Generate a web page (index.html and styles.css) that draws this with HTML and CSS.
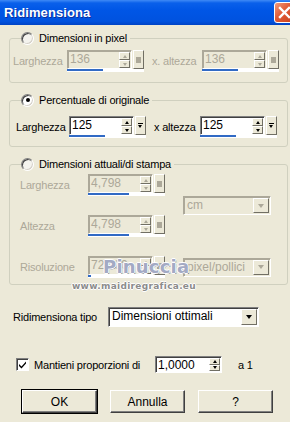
FILE: index.html
```html
<!DOCTYPE html>
<html lang="it">
<head>
<meta charset="utf-8">
<title>Ridimensiona</title>
<link rel="stylesheet" href="styles.css">
</head>
<body>
<div class="window">
  <div class="titlebar">
    <span class="title">Ridimensiona</span>
    <span class="close"><svg width="13" height="13" viewBox="0 0 13 13"><path d="M2 2 L11 11 M11 2 L2 11" stroke="#fff" stroke-width="2.4" stroke-linecap="square"/></svg></span>
  </div>
  <div class="content">
    <fieldset class="group g1 disabled">
      <legend><span class="radio"></span><span class="ltxt">Dimensioni in pixel</span></legend>
      <div class="row">
        <span class="lbl w54">Larghezza</span>
        <span class="spin">
          <span class="field"><span class="val">136</span><span class="arrows"><i class="up"></i><i class="dn"></i></span></span>
          <span class="extra"><i class="sq"></i></span>
          <span class="track"><b style="width:36px"></b></span>
        </span>
        <span class="lbl gap8 w50">x. altezza</span>
        <span class="spin">
          <span class="field"><span class="val">136</span><span class="arrows"><i class="up"></i><i class="dn"></i></span></span>
          <span class="extra"><i class="sq"></i></span>
          <span class="track"><b style="width:36px"></b></span>
        </span>
      </div>
    </fieldset>

    <fieldset class="group g2">
      <legend><span class="radio on"></span><span class="ltxt">Percentuale di originale</span></legend>
      <div class="row">
        <span class="lbl w53">Larghezza</span>
        <span class="spin">
          <span class="field"><span class="val">125</span><span class="arrows"><i class="up"></i><i class="dn"></i></span></span>
          <span class="extra"><i class="pop"></i></span>
          <span class="track"><b style="width:36px"></b></span>
        </span>
        <span class="lbl gap8 w46">x altezza</span>
        <span class="spin">
          <span class="field"><span class="val">125</span><span class="arrows"><i class="up"></i><i class="dn"></i></span></span>
          <span class="extra"><i class="pop"></i></span>
          <span class="track"><b style="width:36px"></b></span>
        </span>
      </div>
    </fieldset>

    <fieldset class="group g3 disabled">
      <legend><span class="radio"></span><span class="ltxt">Dimensioni attuali/di stampa</span></legend>
      <div class="grid">
        <span class="lbl">Larghezza</span>
        <span class="spin">
          <span class="field"><span class="val">4,798</span><span class="arrows"><i class="up"></i><i class="dn"></i></span></span>
          <span class="extra"><i class="sq"></i></span>
          <span class="track"><b style="width:41px"></b></span>
        </span>
        <span class="select dis span2"><span class="stxt">cm</span><span class="sbtn"><i class="tri"></i></span></span>
        <span class="lbl">Altezza</span>
        <span class="spin">
          <span class="field"><span class="val">4,798</span><span class="arrows"><i class="up"></i><i class="dn"></i></span></span>
          <span class="extra"><i class="sq"></i></span>
          <span class="track"><b style="width:41px"></b></span>
        </span>
        <span class="lbl">Risoluzione</span>
        <span class="spin">
          <span class="field"><span class="val">72,000</span><span class="arrows"><i class="up"></i><i class="dn"></i></span></span>
          <span class="extra"><i class="sq"></i></span>
          <span class="track"><b style="width:3px"></b></span>
        </span>
        <span class="select dis"><span class="stxt">pixel/pollici</span><span class="sbtn"><i class="tri"></i></span></span>
      </div>
    </fieldset>

    <div class="tipo">
      <span class="lbl w95">Ridimensiona tipo</span>
      <span class="select wide"><span class="stxt">Dimensioni ottimali</span><span class="sbtn"><i class="tri"></i></span></span>
    </div>

    <div class="keep">
      <span class="check"><svg width="9" height="9" viewBox="0 0 9 9"><path d="M1 4 L3.5 6.5 L8 1.5 L8 3.5 L3.5 8.5 L1 6 Z" fill="#000"/></svg></span>
      <span class="lbl w121">Mantieni proporzioni di</span>
      <span class="numbox"><span class="val">1,0000</span><span class="arrows small"><i class="up"></i><i class="dn"></i></span></span>
      <span class="lbl a1">a 1</span>
    </div>

    <div class="buttons">
      <span class="btn def">OK</span>
      <span class="btn">Annulla</span>
      <span class="btn q">?</span>
    </div>
  </div>
  <div class="wm1">Pinuccia</div>
  <div class="wm2">www.maidiregrafica.eu</div>
</div>
</body>
</html>
```
FILE: styles.css
```css
* { box-sizing: border-box; }
html, body { margin: 0; padding: 0; }
body {
  width: 290px; height: 422px; overflow: hidden;
  background: #ece9d8;
  font-family: "Liberation Sans", Arial, sans-serif;
  font-size: 11px; letter-spacing: -0.2px; color: #000;
}
.window { position: relative; width: 290px; height: 422px; overflow: hidden; }

.titlebar {
  height: 25px; display: flex; align-items: center; justify-content: space-between;
  padding-left: 4px;
  background: linear-gradient(#3f8af6 0, #0a60ea 3px, #0056e6 40%, #0052df 85%, #0043c4 100%);
}
.title { color: #fff; font-weight: bold; font-size: 13px; letter-spacing: 0.1px; text-shadow: 1px 1px 0 #0b2f9c; }
.close {
  width: 21px; height: 21px; margin-right: -5px;
  border: 1px solid #fff; border-radius: 3px;
  background: linear-gradient(135deg, #f39a7c, #e15a35 45%, #c8401d);
  display: flex; align-items: center; justify-content: center;
}

.content { padding: 6px 2px 0 9px; }

fieldset.group {
  margin: 0; min-width: 0;
  border: 1px solid #d0d0bf; border-radius: 3px;
  padding: 5px 3px 10px 3px;
}
fieldset.g2 { margin-top: 10px; padding: 9px 3px 8px 6px; }
fieldset.g3 { margin-top: 10px; padding: 3px 3px 6px 10px; }
legend {
  padding: 0 3px 0 0; margin-left: 8px;
  height: 14px; line-height: 14px;
  display: flex; align-items: center;
}
fieldset.g2 legend { margin-left: 5px; }
fieldset.g3 legend { margin-left: 1px; }
.ltxt { margin-left: 5px; }

.radio {
  width: 13px; height: 13px; border-radius: 50%;
  background: #fff;
  border: 1px solid; border-color: #808080 #ffffff #ffffff #808080;
  box-shadow: inset 1px 1px 0 #404040, inset -1px -1px 0 #d4d0c8;
  display: flex; align-items: center; justify-content: center;
}
.disabled .radio { background: #f4f3ee; }
.radio.on::after { content: ""; width: 4px; height: 4px; border-radius: 50%; background: #000; }

.row { display: flex; align-items: center; }
.lbl { white-space: nowrap; }
.w54 { width: 54px; }
.w53 { width: 53px; }
.w50 { width: 50px; }
.w46 { width: 46px; }
.w95 { width: 95px; }
.w121 { width: 121px; }
.gap8 { margin-left: 8px; }

.disabled .lbl { color: #aca899; }

.spin {
  display: grid; grid-template-columns: 65px 12px; grid-template-rows: 19px 3px;
  width: 77px;
}
.field {
  display: flex; align-items: stretch;
  background: #fff;
  border: 1px solid; border-color: #808080 #ffffff #ffffff #808080;
  box-shadow: inset 1px 1px 0 #404040;
  padding: 1px 1px 0 2px;
}
.disabled .field { background: #ece9d8; box-shadow: inset 1px 1px 0 #aca899; border-color: #aca899 #fff #fff #aca899; }
.val { flex: 1; font-size: 12px; line-height: 15px; letter-spacing: 0; }
.disabled .val { color: #aca899; }
.arrows { width: 11px; display: flex; flex-direction: column; }
.arrows i {
  flex: 1; display: flex; align-items: center; justify-content: center;
  background: #ece9d8;
  border: 1px solid; border-color: #fff #716f64 #716f64 #fff;
}
.arrows i::after { content: ""; border-left: 2.5px solid transparent; border-right: 2.5px solid transparent; }
.arrows .up::after { border-bottom: 3px solid #000; }
.arrows .dn::after { border-top: 3px solid #000; }
.disabled .arrows .up::after { border-bottom-color: #aca899; }
.disabled .arrows .dn::after { border-top-color: #aca899; }

.extra {
  display: flex; align-items: center; justify-content: center;
  background: #ece9d8;
  border: 1px solid; border-color: #fff #716f64 #716f64 #fff;
  margin-left: 1px;
}
.extra .sq { width: 5px; height: 6px; background: #aca899; }
.extra .pop { width: 5px; height: 6px; border-top: 1px solid #000; position: relative; }
.extra .pop::after { content: ""; position: absolute; left: 0; top: 1px; border-left: 2.5px solid transparent; border-right: 2.5px solid transparent; border-top: 3px solid #000; }
.track { grid-column: 1 / 3; background: #fff; display: block; }
.track b { display: block; height: 2px; background: #316ac5; }

.grid {
  display: grid; grid-template-columns: 68px 77px 88px;
  grid-template-rows: 22px 22px 22px; row-gap: 19px; column-gap: 0;
  align-items: center;
}
.grid .select { margin-left: 18px; width: 88px; }
.grid .span2 { grid-row: 1 / 3; grid-column: 3; }

.select {
  display: flex; align-items: stretch; height: 19px;
  background: #fff;
  border: 1px solid; border-color: #808080 #fff #fff #808080;
  box-shadow: inset 1px 1px 0 #404040;
  padding: 1px 1px 1px 2px;
}
.select.dis { background: #ece9d8; box-shadow: inset 1px 1px 0 #aca899; border-color: #aca899 #fff #fff #aca899; height: 19px; }
.stxt { flex: 1; font-size: 12px; line-height: 15px; padding-left: 1px; letter-spacing: 0; }
.select.dis .stxt { color: #aca899; }
.sbtn {
  width: 16px; display: flex; align-items: center; justify-content: center;
  background: #ece9d8;
  border: 1px solid; border-color: #fff #716f64 #716f64 #fff;
}
.tri { border-left: 3.5px solid transparent; border-right: 3.5px solid transparent; border-top: 4px solid #000; }
.select.dis .tri { border-top-color: #aca899; }

.tipo { display: flex; align-items: center; margin-top: 22px; padding-left: 4px; }
.select.wide { width: 151px; height: 20px; }

.keep { display: flex; align-items: center; margin-top: 29px; padding-left: 7px; height: 17px; }
.check {
  width: 13px; height: 13px; margin-right: 5px;
  background: #fff;
  border: 1px solid; border-color: #808080 #fff #fff #808080;
  box-shadow: inset 1px 1px 0 #404040;
  display: flex; align-items: center; justify-content: center;
}
.numbox {
  width: 67px; height: 17px; display: flex;
  background: #fff;
  border: 1px solid; border-color: #808080 #fff #fff #808080;
  box-shadow: inset 1px 1px 0 #404040;
  padding: 1px 1px 1px 2px;
}
.numbox .val { font-size: 12px; line-height: 14px; }
.a1 { margin-left: 16px; }

.buttons { display: flex; margin-top: 17px; padding-left: 13px; gap: 13px; }
.btn {
  width: 75px; height: 23px;
  display: flex; align-items: center; justify-content: center;
  font-size: 12px; letter-spacing: 0;
  background: #ece9d8;
  border: 1px solid; border-color: #fff #404040 #404040 #fff;
  box-shadow: inset -1px -1px 0 #808080;
}
.btn.def { outline: 1px solid #000; outline-offset: 0; }

.wm1 {
  position: absolute; left: 103px; top: 256px;
  font-family: "DejaVu Sans", sans-serif; font-weight: bold; font-size: 18px; letter-spacing: 0.2px;
  color: #a3aac4;
  text-shadow: 1px 0 0 #fff, -1px 0 0 #fff, 0 1px 0 #fff, 0 -1px 0 #fff, 1px 1px 0 #7a7f95;
}
.wm2 {
  position: absolute; left: 72px; top: 281px;
  font-family: "DejaVu Sans", sans-serif; font-weight: bold; font-size: 9px; letter-spacing: 0.3px;
  color: #8c8c8c;
  text-shadow: 1px 0 0 #fff, -1px 0 0 #fff, 0 1px 0 #fff, 0 -1px 0 #fff;
}
```
